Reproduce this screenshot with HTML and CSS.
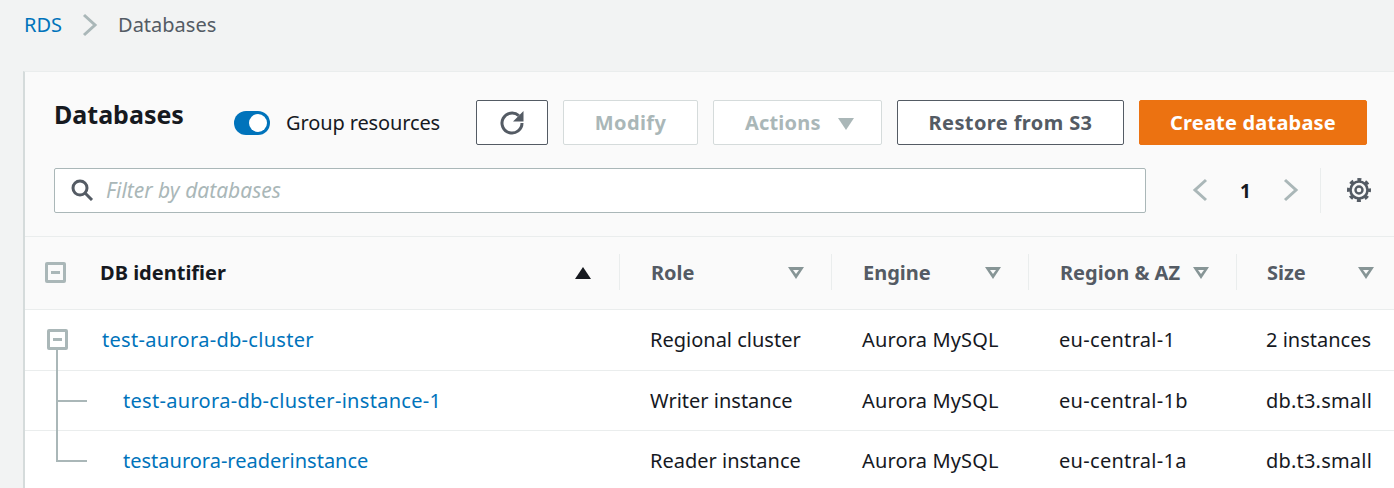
FILE: index.html
```html
<!DOCTYPE html>
<html lang="en">
<head>
  <meta charset="UTF-8">
  <title>Databases</title>
  <link rel="stylesheet" href="styles.css">
</head>
<body>
  <nav class="crumbs">
    <a href="#">RDS</a>
    <svg width="16" height="24" viewBox="0 0 16 24"><path d="M2 2l11 10L2 22" fill="none" stroke="#aab7b8" stroke-width="3"/></svg>
    <span>Databases</span>
  </nav>

  <section class="panel">
    <div class="toolbar">
      <h1>Databases</h1>
      <div class="toggle"><span class="knob"></span></div>
      <span class="toggle-label">Group resources</span>
      <button class="btn refresh">
        <svg width="26" height="26" viewBox="0 0 26 26"><path d="M23 13a10 10 0 1 1-3.2-7.3" fill="none" stroke="#545b64" stroke-width="3"/><path d="M24.5 1v10.5H14z" fill="#545b64"/></svg>
      </button>
      <button class="btn disabled modify">Modify</button>
      <button class="btn disabled actions">Actions <span class="tri"></span></button>
      <button class="btn restore">Restore from S3</button>
      <button class="btn primary">Create database</button>
    </div>

    <div class="filter-row">
      <div class="filter">
        <svg width="24" height="22" viewBox="0 0 24 22"><circle cx="10" cy="9" r="7" fill="none" stroke="#545b64" stroke-width="3"/><path d="M15 14l7 7" stroke="#545b64" stroke-width="3"/></svg>
        <span>Filter by databases</span>
      </div>
      <div class="pager">
        <svg width="16" height="24" viewBox="0 0 16 24"><path d="M14 2L3 12l11 10" fill="none" stroke="#aab7b8" stroke-width="3"/></svg>
        <b>1</b>
        <svg width="16" height="24" viewBox="0 0 16 24"><path d="M2 2l11 10L2 22" fill="none" stroke="#aab7b8" stroke-width="3"/></svg>
      </div>
      <div class="settings">
        <svg width="26" height="26" viewBox="0 0 26 26"><circle cx="13" cy="13" r="3.5" fill="none" stroke="#545b64" stroke-width="2.4"/><circle cx="13" cy="13" r="8.5" fill="none" stroke="#545b64" stroke-width="2.6"/><circle cx="13" cy="13" r="10.5" fill="none" stroke="#545b64" stroke-width="3" stroke-dasharray="4 4.25" stroke-dashoffset="2"/></svg>
      </div>
    </div>

    <table class="db-table">
      <colgroup>
        <col class="c-check"><col class="c-id"><col class="c-role"><col class="c-engine"><col class="c-region"><col class="c-size">
      </colgroup>
      <thead>
        <tr>
          <th><span class="box"></span></th>
          <th><div class="th-in first">DB identifier<span class="sort-on"></span></div></th>
          <th><div class="th-in">Role<span class="sort"></span></div></th>
          <th><div class="th-in">Engine<span class="sort"></span></div></th>
          <th><div class="th-in">Region &amp; AZ<span class="sort"></span></div></th>
          <th><div class="th-in last">Size<span class="sort"></span></div></th>
        </tr>
      </thead>
      <tbody>
        <tr class="cluster">
          <td class="tree"><span class="box"></span><i class="line down"></i></td>
          <td><a class="hyph" href="#">test-aurora-db-cluster</a></td>
          <td>Regional cluster</td>
          <td class="engine">Aurora MySQL</td>
          <td class="hyph">eu-central-1</td>
          <td>2 instances</td>
        </tr>
        <tr>
          <td class="tree"><i class="line full"></i><i class="line branch"></i></td>
          <td><a class="child hyph" href="#">test-aurora-db-cluster-instance-1</a></td>
          <td>Writer instance</td>
          <td class="engine">Aurora MySQL</td>
          <td class="hyph">eu-central-1b</td>
          <td class="size">db.t3.small</td>
        </tr>
        <tr>
          <td class="tree"><i class="line half"></i><i class="line branch"></i></td>
          <td><a class="child" href="#">testaurora-readerinstance</a></td>
          <td>Reader instance</td>
          <td class="engine">Aurora MySQL</td>
          <td class="hyph">eu-central-1a</td>
          <td class="size">db.t3.small</td>
        </tr>
      </tbody>
    </table>
  </section>
</body>
</html>
```

FILE: styles.css
```css
html, body {
  margin: 0;
  height: 488px;
  overflow: hidden;
}
body {
  background: #f2f3f3;
  font-family: "Noto Sans", "Liberation Sans", Arial, sans-serif;
  font-size: 20px;
  color: #16191f;
}
a {
  color: #0073bb;
  text-decoration: none;
}
.crumbs {
  display: flex;
  align-items: center;
  gap: 20px;
  height: 48px;
  padding-left: 24px;
  color: #545b64;
}
.crumbs svg {
  margin-top: 2px;
}
.panel {
  margin: 23px 0 0 23px;
  background: #fafafa;
  border-top: 1px solid #eaeded;
  border-left: 2px solid #d5dbdb;
}
.toolbar {
  display: flex;
  align-items: center;
  padding: 28px 0 0 29px;
}
.toolbar h1 {
  width: 180px;
  margin: 0;
  font-size: 25px;
  font-weight: 700;
  position: relative;
  top: -9px;
}
.toggle {
  width: 36px;
  height: 24px;
  border-radius: 12px;
  background: #0073bb;
  position: relative;
  margin-right: 16px;
}
.knob {
  position: absolute;
  right: 3px;
  top: 3px;
  width: 18px;
  height: 18px;
  border-radius: 50%;
  background: #fff;
}
.toggle-label {
  width: 190px;
  letter-spacing: -0.12px;
}
.btn {
  height: 45px;
  border: 1px solid #545b64;
  border-radius: 2px;
  background: #fff;
  font: 700 20px "Noto Sans", "Liberation Sans", Arial, sans-serif;
  letter-spacing: 0.2px;
  color: #545b64;
  padding: 0;
  margin-right: 15px;
}
.refresh {
  width: 72px;
}
.refresh svg {
  display: block;
  margin: 0 auto;
}
.disabled {
  border-color: #d5dbdb;
  color: #aab7b8;
}
.modify {
  width: 135px;
  letter-spacing: 0.4px;
}
.actions {
  width: 169px;
  padding-left: 4px;
}
.tri {
  display: inline-block;
  margin-left: 12px;
  border-left: 8px solid transparent;
  border-right: 8px solid transparent;
  border-top: 12px solid #aab7b8;
}
.restore {
  width: 227px;
  letter-spacing: 0.4px;
}
.primary {
  width: 228px;
  margin-right: 0;
  background: #ec7211;
  border-color: #ec7211;
  color: #fff;
}
.filter-row {
  display: flex;
  align-items: center;
  padding: 23px 0 23px 29px;
  border-bottom: 1px solid #eaeded;
}
.filter {
  display: flex;
  align-items: center;
  gap: 12px;
  box-sizing: border-box;
  width: 1092px;
  height: 45px;
  padding: 0 0 2px 15px;
  background: #fff;
  border: 1px solid #aab7b8;
  border-radius: 2px;
  font-size: 21px;
  font-style: italic;
  color: #aab7b8;
}
.pager {
  display: flex;
  align-items: center;
  gap: 32px;
  margin-left: 46px;
  font-size: 19px;
}
.pager svg, .settings svg {
  margin-bottom: 2px;
}
.settings {
  margin-left: 21px;
  padding-left: 25px;
  border-left: 1px solid #eaeded;
  height: 45px;
  display: flex;
  align-items: center;
}
.db-table {
  width: 1369px;
  table-layout: fixed;
  border-collapse: collapse;
}
.c-check { width: 60px; }
.c-id { width: 534px; }
.c-role { width: 212px; }
.c-engine { width: 197px; }
.c-region { width: 208px; }
.c-size { width: 158px; }
th {
  height: 70px;
  padding: 0 0 2px;
  border-bottom: 1px solid #eaeded;
  text-align: left;
  font-weight: 700;
  color: #545b64;
}
.th-in {
  display: flex;
  align-items: center;
  justify-content: space-between;
  height: 36px;
  padding: 0 27px 0 31px;
  border-left: 1px solid #eaeded;
}
.th-in.first {
  padding: 0 28px 0 15px;
  border-left: 0;
  color: #16191f;
}
.th-in.last {
  padding: 0 20px 0 30px;
}
.sort, .sort-on {
  position: relative;
  width: 0;
  height: 0;
  margin-top: 2px;
  border-left: 8px solid transparent;
  border-right: 8px solid transparent;
}
.sort {
  border-top: 12px solid #879596;
}
.sort::after {
  content: "";
  position: absolute;
  left: -3px;
  top: -9px;
  border-left: 3px solid transparent;
  border-right: 3px solid transparent;
  border-top: 4px solid #fafafa;
}
.sort-on {
  border-bottom: 12px solid #16191f;
}
td {
  height: 59px;
  padding: 0 0 0 31px;
  background: #fff;
  border-bottom: 1px solid #eaeded;
}
td:last-child {
  padding-left: 30px;
}
.cluster td {
  height: 58px;
  padding-bottom: 2px;
}
td:nth-child(2) {
  padding-left: 17px;
}
.hyph {
  letter-spacing: 0.3px;
}
.engine {
  letter-spacing: 0.15px;
}
.size {
  letter-spacing: 0.2px;
}
.child {
  margin-left: 21px;
}
.tree {
  position: relative;
  padding: 0;
}
.box {
  display: block;
  box-sizing: border-box;
  position: relative;
  width: 21px;
  height: 21px;
  margin-left: 20px;
  border: 3px solid #aab7b8;
  border-radius: 2px;
}
.box::after {
  content: "";
  position: absolute;
  left: 3px;
  right: 3px;
  top: 6px;
  height: 3px;
  background: #aab7b8;
}
.tree .box {
  margin-left: 22px;
}
.line {
  position: absolute;
  background: #aab7b8;
}
.line.down { left: 31px; top: 40px; bottom: -1px; width: 2px; }
.line.full { left: 31px; top: 0; bottom: -1px; width: 2px; }
.line.half { left: 31px; top: 0; height: 30px; width: 2px; }
.line.branch { left: 31px; top: 29px; width: 31px; height: 2px; }
```
